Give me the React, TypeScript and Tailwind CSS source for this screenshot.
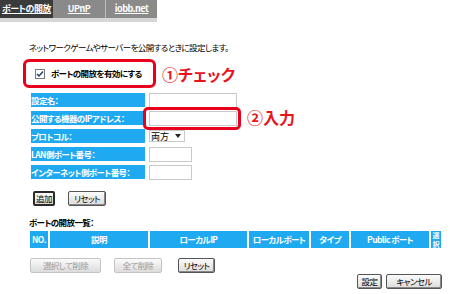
import React from "react";

const jp = "text-[8.5px] tracking-[-0.6px] whitespace-nowrap";

const btn = `h-[15px] flex items-center justify-center leading-none rounded-[2px] bg-gradient-to-b from-[#fbfbfb] to-[#dcdcdc] ${jp}`;

function Btn({
  label,
  w,
  tone = "normal",
}: {
  label: string;
  w: string;
  tone?: "normal" | "default" | "disabled";
}) {
  const border =
    tone === "default"
      ? "border-2 border-[#2a2a2a]"
      : tone === "disabled"
      ? "border border-[#c4c4c4] text-[#9a9a9a]"
      : "border border-[#555] shadow-[inset_-1px_-1px_0_#888]";
  return <div className={`${btn} ${border} ${w}`}>{label}</div>;
}

function Row({ label, children }: { label: string; children: React.ReactNode }) {
  return (
    <div className="flex h-[16px] items-center">
      <div className={`w-[114px] h-[14px] bg-[#1fa9f1] text-white font-bold leading-[14px] ${jp}`}>
        {label}
      </div>
      <div className="ml-[4px] h-[16px] flex items-center">{children}</div>
    </div>
  );
}

const input = "h-[15px] border border-[#c9c9c9] bg-white";
const th = "bg-[#1fa9f1] flex items-center justify-center";

export default function App() {
  return (
    <div className="w-[450px] h-[294px] bg-white overflow-hidden text-black font-['Noto_Sans_CJK_JP',sans-serif] [font-feature-settings:'palt']">
      {/* tabs */}
      <div className="w-[157px]">
        <div className="flex h-[18px] bg-[#8a8a8a] text-white font-bold underline text-[9px] tracking-[-0.5px] whitespace-nowrap">
          <div className="w-[53px] bg-[#3b3b3b] flex items-center justify-center">ポートの開放</div>
          <div className="w-[53px] flex items-center justify-center border-r border-[#bdbdbd]">UPnP</div>
          <div className="flex-1 flex items-center justify-center">iobb.net</div>
        </div>
        <div className="h-[4px] bg-[#d6d6d6]" />
      </div>

      <p className={`mt-[19px] ml-[29px] leading-[12px] ${jp}`}>
        ネットワークゲームやサーバーを公開するときに設定します。
      </p>

      {/* enable checkbox */}
      <div className="flex items-center mt-[6px] ml-[23px]">
        <div className="w-[133px] h-[29px] border-[3px] border-[#e8001c] rounded-[6px] flex items-center pl-[9px] gap-[6px]">
          <div className="w-[10px] h-[10px] border border-[#7a7a7a] bg-white flex items-center justify-center">
            <svg width="8" height="8" viewBox="0 0 8 8">
              <path d="M1 4 L3 6 L7 1.5" fill="none" stroke="#1b3a7a" strokeWidth="1.4" />
            </svg>
          </div>
          <span className={`font-bold ${jp}`}>ポートの開放を有効にする</span>
        </div>
        <span className="ml-[6px] text-[#e8141c] font-bold text-[16px] leading-none">①チェック</span>
      </div>

      {/* form */}
      <div className="mt-[4px] ml-[31px] flex flex-col gap-[2px]">
        <Row label="設定名：">
          <div className={`${input} w-[88px]`} />
        </Row>
        <Row label="公開する機器のIPアドレス：">
          <div className="relative">
            <div className={`${input} w-[88px]`} />
            <div className="absolute left-[-6px] top-[-4px] w-[98px] h-[23px] border-[3px] border-[#e8001c] rounded-[5px]" />
            <span className="absolute left-[98px] top-[-2px] whitespace-nowrap text-[#e8141c] font-bold text-[16px] leading-none">
              ②入力
            </span>
          </div>
        </Row>
        <Row label="プロトコル：">
          <div className="w-[36px] h-[12px] border border-[#c9c9c9] bg-white flex items-center justify-between pl-[1px] pr-[3px] text-[9px] leading-none">
            <span>両方</span>
            <svg width="6" height="4" viewBox="0 0 6 4">
              <path d="M0 0 H6 L3 4 Z" fill="#222" />
            </svg>
          </div>
        </Row>
        <Row label="LAN側ポート番号：">
          <div className={`${input} w-[43px]`} />
        </Row>
        <Row label="インターネット側ポート番号：">
          <div className={`${input} w-[43px]`} />
        </Row>
      </div>

      {/* add / reset */}
      <div className="flex mt-[11px] ml-[33px] gap-[13px]">
        <Btn label="追加" w="w-[22px]" tone="default" />
        <Btn label="リセット" w="w-[38px]" />
      </div>

      <p className={`mt-[10px] ml-[29px] font-bold leading-[12px] ${jp}`}>ポートの開放一覧：</p>

      {/* list header */}
      <div className={`mt-[3px] ml-[30px] flex gap-[2px] h-[17px] text-white font-bold ${jp}`}>
        <div className={`w-[18px] ${th}`}>NO.</div>
        <div className={`w-[98px] ${th}`}>説明</div>
        <div className={`w-[97px] ${th}`}>ローカルIP</div>
        <div className={`w-[60px] ${th}`}>ローカルポート</div>
        <div className={`w-[38px] ${th}`}>タイプ</div>
        <div className={`w-[78px] ${th}`}>Public ポート</div>
        <div className="w-[10px] bg-[#1fa9f1] flex items-center justify-center">
          <div className="w-[7px] text-[7px] leading-[8.5px] tracking-normal whitespace-normal break-all text-center">
            選択
          </div>
        </div>
      </div>

      <div className="flex mt-[10px] ml-[30px]">
        <Btn label="選択して削除" w="w-[71px]" tone="disabled" />
        <div className="ml-[13px]">
          <Btn label="全て削除" w="w-[48px]" tone="disabled" />
        </div>
        <div className="ml-[16px]">
          <Btn label="リセット" w="w-[37px]" />
        </div>
      </div>

      <div className="flex justify-end gap-[4px] mt-[1px] pr-[8px]">
        <Btn label="設定" w="w-[25px]" />
        <Btn label="キャンセル" w="w-[56px]" />
      </div>
    </div>
  );
}
